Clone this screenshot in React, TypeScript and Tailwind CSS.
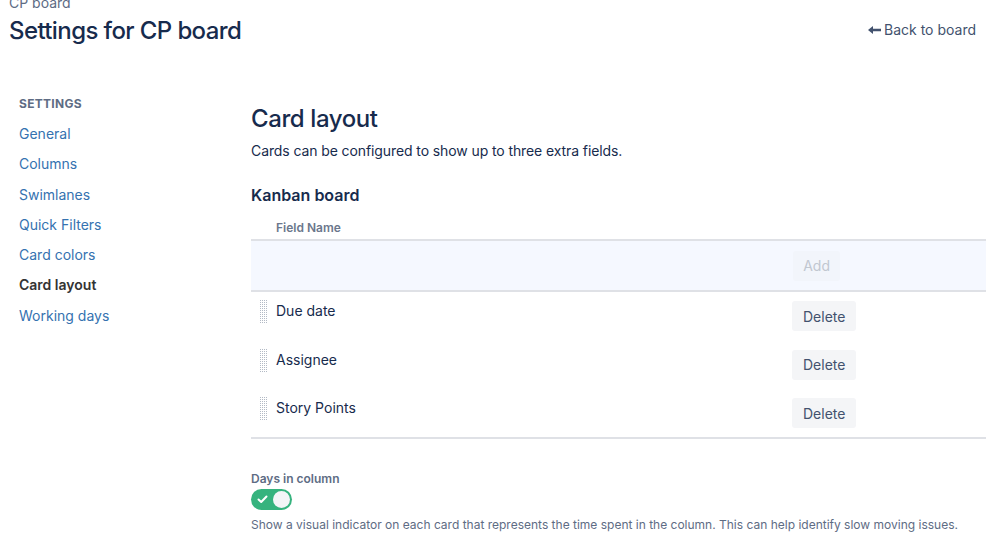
import React from "react";

const font = { fontFamily: '"Inter", "Liberation Sans", sans-serif' };

function DragHandle() {
  return (
    <svg width="7" height="24" viewBox="0 0 7 24" className="shrink-0">
      {Array.from({ length: 12 }).map((_, r) =>
        [0, 2, 4, 6].map((c) => (
          <rect key={`${r}-${c}`} x={c} y={r * 2} width="1" height="1" fill="#b3bac5" />
        ))
      )}
    </svg>
  );
}

function Row({ name }: { name: string }) {
  return (
    <div className="flex h-[48.5px] items-start">
      <div className="flex w-[25px] justify-end pr-[9px] pt-[7px]">
        <DragHandle />
      </div>
      <div className="flex-1 pt-[8px] text-[14px] leading-[20px] text-[#172b4d]">{name}</div>
      <div className="w-[194px] pt-[8px]">
        <button className="h-[30px] rounded-[3px] bg-[#f4f5f7] px-[11px] text-[14px] text-[#42526e]">
          Delete
        </button>
      </div>
    </div>
  );
}

export default function App() {
  const links = ["General", "Columns", "Swimlanes", "Quick Filters", "Card colors"];
  return (
    <div className="relative h-[555px] w-[999px] overflow-hidden bg-white" style={font}>
      <div className="flex items-start justify-between pl-[9px] pr-[23px]">
        <div className="-mt-[7px]">
          <div className="text-[14px] leading-[20px] text-[#5e6c84]">CP board</div>
          <h1 className="mt-[3px] text-[24px] font-medium leading-[30px] tracking-[-0.6px] text-[#172b4d]">
            Settings for CP board
          </h1>
        </div>
        <div className="mt-[19px] flex items-center gap-[2px] text-[14px] text-[#42526e]">
          <svg width="14" height="10" viewBox="0 0 14 10">
            <path d="M0 5 L5 1 L5 3.7 L13 3.7 L13 6.3 L5 6.3 L5 9 Z" fill="#42526e" />
          </svg>
          <span>Back to board</span>
        </div>
      </div>

      <div className="mt-[46px] flex">
        <div className="w-[251px] shrink-0 pl-[19px] pt-[4px]">
          <div className="text-[12px] font-bold leading-[16px] tracking-[0.3px] text-[#5e6c84]">
            SETTINGS
          </div>
          <div className="mt-[12px] flex flex-col">
            {links.map((l) => (
              <div key={l} className="h-[30.3px] text-[14px] leading-[20px] text-[#3572b0]">
                {l}
              </div>
            ))}
            <div className="h-[30.3px] text-[14px] font-semibold leading-[20px] text-[#333333]">
              Card layout
            </div>
            <div className="h-[30px] text-[14px] leading-[20px] text-[#3572b0]">Working days</div>
          </div>
        </div>

        <div className="w-[735px] shrink-0">
          <h2 className="mt-[12px] text-[24px] font-medium leading-[30px] tracking-[-0.4px] text-[#172b4d]">
            Card layout
          </h2>
          <p className="mt-[7px] text-[14px] leading-[20px] tracking-[-0.1px] text-[#172b4d]">
            Cards can be configured to show up to three extra fields.
          </p>
          <h3 className="mt-[23px] text-[16px] font-semibold leading-[22px] text-[#172b4d]">
            Kanban board
          </h3>
          <div className="mt-[14px] pl-[25px] text-[12px] font-semibold leading-[16px] text-[#6b778c]">
            Field Name
          </div>
          <div className="mt-[3px] border-t-2 border-[#dfe1e6]" />
          <div className="flex h-[49px] items-center justify-end bg-[#f5f8ff] pr-[146px]">
            <button className="h-[30px] rounded-[3px] bg-[#f2f5fb] px-[10px] text-[14px] text-[#c1c7d0]">
              Add
            </button>
          </div>
          <div className="border-t-2 border-[#dfe1e6]" />
          <div className="pt-[1px]">
            <Row name="Due date" />
            <Row name="Assignee" />
            <Row name="Story Points" />
          </div>
          <div className="-mt-[2px] border-t-2 border-[#dfe1e6]" />

          <div className="mt-[32px] text-[12px] font-semibold leading-[16px] text-[#5e6c84]">
            Days in column
          </div>
          <div className="mt-[2px] flex h-[21px] w-[41px] items-center justify-between rounded-full bg-[#36b37e] pl-[6px] pr-[2px]">
            <svg width="11" height="9" viewBox="0 0 11 9">
              <path d="M1.5 4.5 L4.2 7 L9.5 1.5" stroke="white" strokeWidth="2" fill="none" strokeLinecap="round" strokeLinejoin="round" />
            </svg>
            <div className="h-[17px] w-[17px] rounded-full bg-[#f4f5f7]" />
          </div>
          <p className="mt-[7px] whitespace-nowrap text-[12px] leading-[16px] text-[#5e6c84]">
            Show a visual indicator on each card that represents the time spent in the column. This can help identify slow moving issues.
          </p>
        </div>
      </div>
    </div>
  );
}
